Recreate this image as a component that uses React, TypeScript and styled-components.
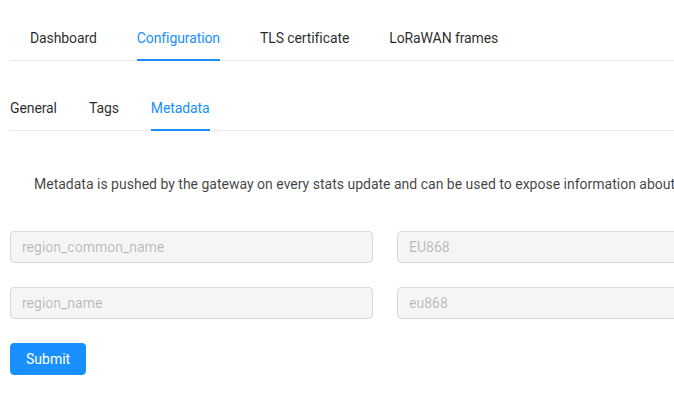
import React from "react";
import styled, { createGlobalStyle } from "styled-components";

const GlobalStyle = createGlobalStyle`
  html, body {
    margin: 0;
    padding: 0;
    background: #ffffff;
    overflow: hidden;
  }
  body {
    font-family: Roboto, "Open Sans", Arial, sans-serif;
    font-size: 14px;
    color: rgba(0, 0, 0, 0.65);
  }
  * { box-sizing: border-box; }
`;

const Page = styled.div`
  width: 760px;
  padding: 14px 0 0 10px;
`;

const TabBar = styled.div<{ $inset: number; $gap: number }>`
  display: flex;
  gap: ${(p) => p.$gap}px;
  padding-left: ${(p) => p.$inset}px;
  border-bottom: 1px solid #e8e8e8;
`;

const Tab = styled.div<{ $active?: boolean }>`
  position: relative;
  padding: 13px 0 11px;
  line-height: 22px;
  font-size: 14px;
  letter-spacing: -0.1px;
  color: ${(p) => (p.$active ? "#1890ff" : "rgba(0, 0, 0, 0.85)")};
  cursor: pointer;
  white-space: nowrap;

  &::after {
    content: "";
    display: ${(p) => (p.$active ? "block" : "none")};
    position: absolute;
    left: 0;
    right: 0;
    bottom: -1px;
    height: 2px;
    background: #1890ff;
  }
`;

const SubTabs = styled.div`
  margin-top: 23px;
`;

const Content = styled.div`
  padding-top: 42px;
`;

const Description = styled.p`
  margin: 0 0 36px;
  padding-left: 24px;
  line-height: 22px;
  white-space: nowrap;
  color: rgba(0, 0, 0, 0.75);
`;

const Form = styled.form`
  display: flex;
  flex-direction: column;
  gap: 24px;
`;

const FieldRow = styled.div`
  display: grid;
  grid-template-columns: 1fr 1fr;
  column-gap: 24px;
`;

const Input = styled.input`
  height: 32px;
  width: 100%;
  padding: 4px 11px;
  font-family: inherit;
  font-size: 14px;
  line-height: 22px;
  color: rgba(0, 0, 0, 0.25);
  background: #f5f5f5;
  border: 1px solid #d9d9d9;
  border-radius: 4px;
  outline: none;
  cursor: not-allowed;
`;

const SubmitButton = styled.button`
  align-self: flex-start;
  height: 32px;
  padding: 0 15px;
  width: 76px;
  font-family: inherit;
  font-size: 14px;
  color: #ffffff;
  background: #1890ff;
  border: 1px solid #1890ff;
  border-radius: 4px;
  cursor: pointer;
`;

const metadata = [
  { key: "region_common_name", value: "EU868" },
  { key: "region_name", value: "eu868" },
];

export default function App() {
  return (
    <>
      <GlobalStyle />
      <Page>
        <TabBar $inset={20} $gap={40}>
          <Tab>Dashboard</Tab>
          <Tab $active>Configuration</Tab>
          <Tab>TLS certificate</Tab>
          <Tab>LoRaWAN frames</Tab>
        </TabBar>
        <SubTabs>
          <TabBar $inset={0} $gap={32}>
            <Tab>General</Tab>
            <Tab>Tags</Tab>
            <Tab $active>Metadata</Tab>
          </TabBar>
        </SubTabs>
        <Content>
          <Description>
            Metadata is pushed by the gateway on every stats update and can be used to expose information about
          </Description>
          <Form onSubmit={(e) => e.preventDefault()}>
            {metadata.map((m) => (
              <FieldRow key={m.key}>
                <Input value={m.key} disabled readOnly />
                <Input value={m.value} disabled readOnly />
              </FieldRow>
            ))}
            <SubmitButton type="submit">Submit</SubmitButton>
          </Form>
        </Content>
      </Page>
    </>
  );
}
